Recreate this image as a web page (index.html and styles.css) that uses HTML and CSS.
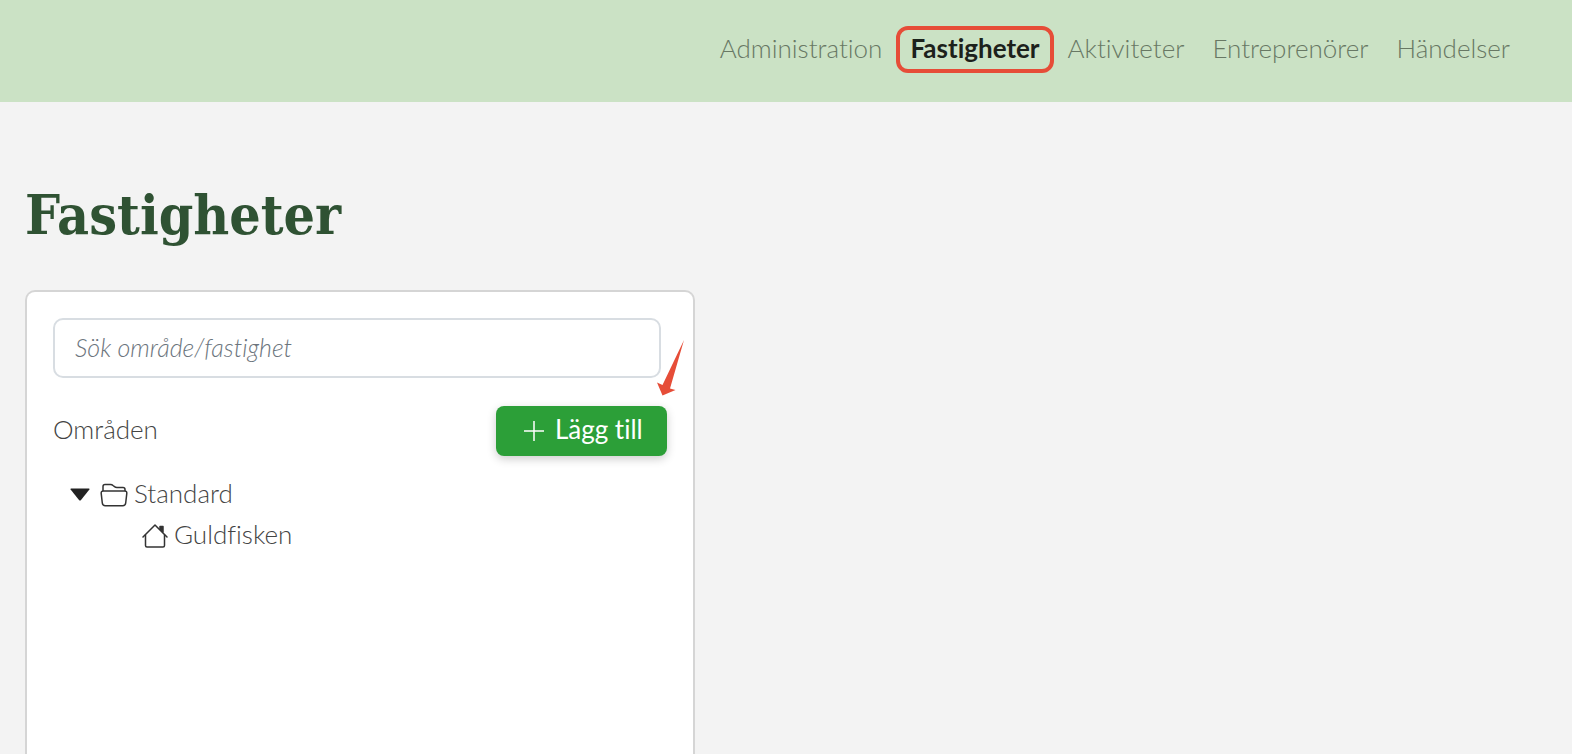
FILE: index.html
```
<!DOCTYPE html>
<html lang="sv">
<head>
	<meta charset="utf-8">
	<title>Fastigheter</title>
	<link rel="stylesheet" href="styles.css">
</head>
<body>
	<header class="topbar">
		<nav class="menu">
			<a href="#">Administration</a>
			<a href="#" class="active">Fastigheter</a>
			<a href="#">Aktiviteter</a>
			<a href="#">Entreprenörer</a>
			<a href="#">Händelser</a>
		</nav>
	</header>

	<main>
		<h1>Fastigheter</h1>
		<section class="card">
			<input type="text" class="search" placeholder="Sök område/fastighet" aria-label="Sök område/fastighet">

			<div class="card-row">
				<span class="label">Områden</span>
				<div class="add">
					<button type="button" class="btn-add">
						<svg width="22" height="22" viewBox="0 0 22 22"><path d="M11 1v20M1 11h20" stroke="currentColor" stroke-width="1.5"/></svg>
						<span class="label">Lägg till</span>
					</button>
					<!-- Red pointer over the button corner -->
					<svg class="pointer" width="28" height="56" viewBox="0 0 28 56"><path d="M27 0L5.500 45L0 42.500L5.500 55.500L18.500 50L13 48.500Z" fill="#e64d38"/></svg>
				</div>
			</div>

			<ul class="tree">
				<li>
					<div class="node">
						<svg class="caret" width="20" height="13" viewBox="0 0 20 13"><path d="M1 .5h18q1 0 .4 1L11 12q-1 1.200-2 0L.6 1.500Q0 .5 1 .5z" fill="#222"/></svg>
						<svg width="28" height="24" viewBox="0 0 28 24" fill="none" stroke="#333" stroke-width="1.500" stroke-linejoin="round"><path d="M3 8V3.500Q3 1.500 5 1.500h5.500q1.500 0 2.500 1l1.500 1.200q1 .8 2.500.8h6Q25 4.500 25 6.500V8"/><path d="M3.500 8h21q2.500 0 2.300 2.300L25.700 20q-.3 2.700-3 2.700H5.300q-2.700 0-3-2.700L1.200 10.300Q1 8 3.500 8z"/></svg>
						<span class="label">Standard</span>
					</div>
					<ul>
						<li>
							<div class="node">
								<svg width="26" height="26" viewBox="0 0 26 26" fill="none" stroke="#333" stroke-width="1.500" stroke-linejoin="round" stroke-linecap="round"><path d="M1 14L13 2l12 12"/><path d="M3.500 12v10.500q0 1.500 1.500 1.500h16q1.500 0 1.500-1.500V12"/><path d="M18 3.500h3V9l-3-3z" fill="#333"/></svg>
								<span class="label">Guldfisken</span>
							</div>
						</li>
					</ul>
				</li>
			</ul>
		</section>
	</main>
</body>
</html>
```
FILE: styles.css
```
* { box-sizing: border-box; }

body {
	display: flex;
	flex-direction: column;
	height: 100vh;
	margin: 0;
	overflow: hidden;
	background: #f3f3f3;
	color: #444;
	font-family: Lato, sans-serif;
	font-size: 26px;
	font-weight: 300;
	font-variant-ligatures: none;
	line-height: 32px;
}

.topbar { padding: 26px 48px 29px; background: #cbe2c5; }

.menu { display: flex; justify-content: flex-end; }
.menu a { padding: 0 10px 3px; border: 4px solid transparent; border-radius: 12px; color: #687864; text-decoration: none; line-height: 36px; }
.menu .active { border-color: #e64d38; color: #1c211b; font-weight: 700; }

main { display: flex; flex: 1; flex-direction: column; padding: 78px 25px 0; }

h1 {
	margin: 0 0 40px;
	color: #2f5233;
	font-family: "DejaVu Serif Condensed", "DejaVu Serif", serif;
	font-size: 55px;
	font-weight: 700;
	line-height: 70px;
}

.card {
	flex: 1;
	width: 44%;
	padding: 26px 26px 0;
	background: #fff;
	border: 2px solid #d5d5d5;
	border-bottom: 0;
	border-radius: 10px 10px 0 0;
}

.search {
	width: 99%;
	height: 60px;
	padding: 0 20px 2px;
	border: 2px solid #d8dde2;
	border-radius: 10px;
	font: italic 300 25px Lato, sans-serif;
	font-variant-ligatures: none;
}
.search::placeholder { color: #6c757d; opacity: 1; }

.card-row { display: flex; align-items: center; justify-content: space-between; margin-top: 28px; }
.label { padding-bottom: 4px; }

.add { position: relative; }
.btn-add {
	display: flex;
	align-items: center;
	gap: 10px;
	height: 50px;
	padding: 0 24px 0 27px;
	border: 0;
	border-radius: 8px;
	background: #2c9f38;
	box-shadow: 0 3px 10px rgba(0, 0, 0, 0.2);
	color: #fff;
	font: 400 26px Lato, sans-serif;
	font-variant-ligatures: none;
}
.pointer { position: absolute; right: -18px; top: -66px; }

.tree, .tree ul { margin: 0; padding: 0; list-style: none; }
.tree { padding: 18px 0 0 17px; }
.tree ul { padding-left: 72px; }
.node { display: flex; align-items: center; gap: 6px; height: 41px; }
.caret { margin-right: 4px; }
```
